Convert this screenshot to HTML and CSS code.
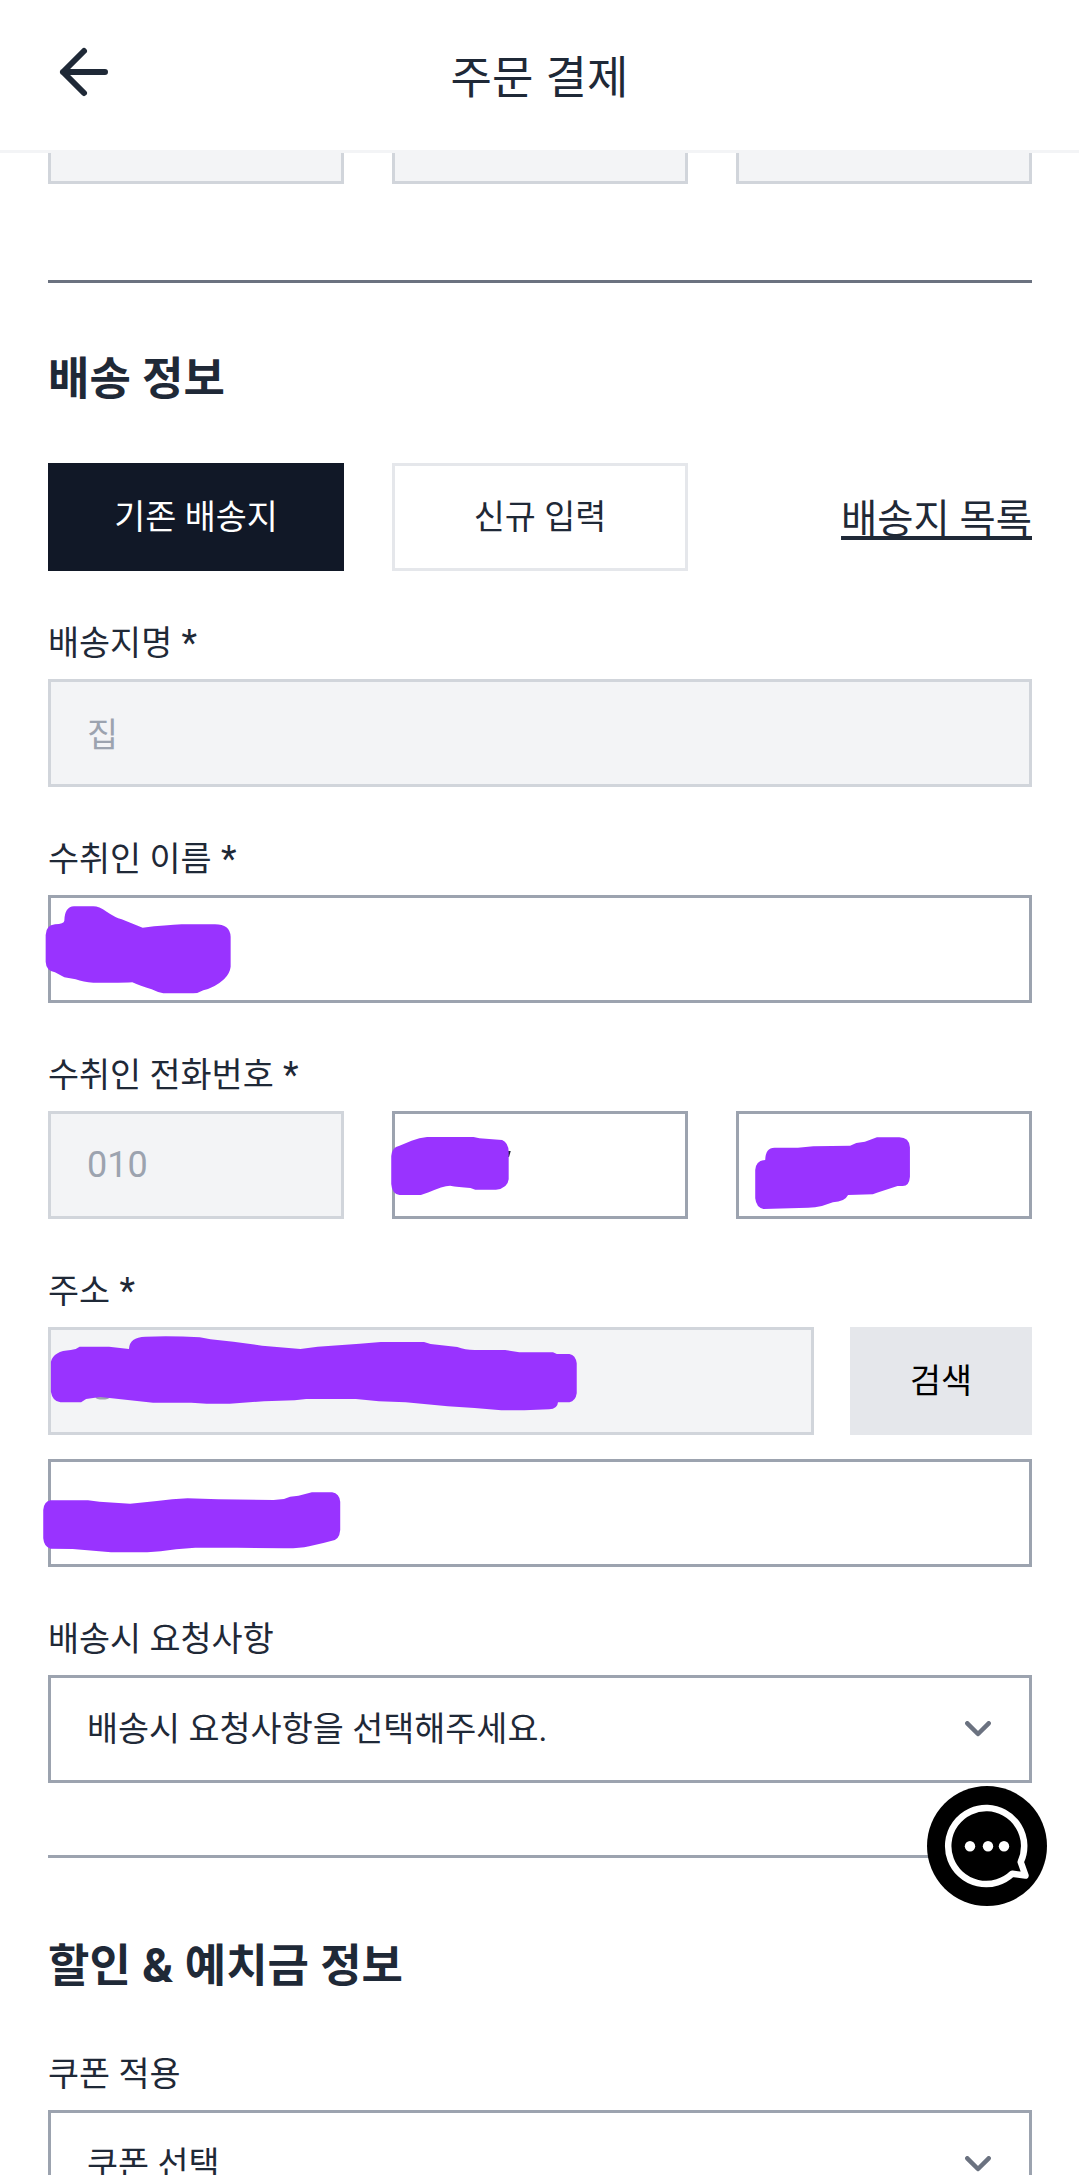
FILE: index.html
```html
<!DOCTYPE html>
<html lang="ko">
<head>
<meta charset="utf-8">
<title>주문 결제</title>
<link rel="stylesheet" href="styles.css">
</head>
<body>
<header class="topbar">
  <svg class="back" viewBox="0 0 54 54" width="54" height="54"><path d="M29 6 8 27l21 21M8 27h42"/></svg>
  <h1 class="title">주문 결제</h1>
</header>
<main class="content">
  <div class="cols">
    <div class="box disabled"></div>
    <div class="box disabled"></div>
    <div class="box disabled"></div>
  </div>

  <section class="section shipping">
    <h2 class="heading">배송 정보</h2>
    <div class="cols">
      <button class="btn primary">기존 배송지</button>
      <button class="btn outline">신규 입력</button>
      <a class="link">배송지 목록</a>
    </div>

    <div class="field">
      <label class="label">배송지명 <span class="star">*</span></label>
      <div class="box disabled"><span class="value low">집</span></div>
    </div>

    <div class="field">
      <label class="label">수취인 이름 <span class="star">*</span></label>
      <div class="hold">
        <div class="box"></div>
        <svg class="scribble" width="984" height="108"><path transform="translate(-48 -255) scale(.3333)" d="M137 885Q138 855 165 853Q192 852 193 842Q194 800 222 799H280Q297 799 320 815Q345 832 365 838L428 863Q500 855 545 853H645Q690 853 692 890V980Q690 1000 672 1018Q645 1043 610 1051Q595 1060 580 1060H490Q475 1058 455 1048Q420 1038 397 1027Q370 1029 280 1028Q250 1027 227 1018L193 1012L165 997Q138 992 137 965Z"/></svg>
      </div>
    </div>

    <div class="field">
      <label class="label">수취인 전화번호 <span class="star">*</span></label>
      <div class="cols">
        <div class="box disabled"><span class="value digits">010</span></div>
        <div class="hold">
          <div class="box"></div>
          <svg class="scribble" width="296" height="108"><path class="ink" transform="translate(-392 -81) scale(.3444 .3333)" d="M1474 363h9l-5 18h-5z"/><path transform="translate(-392 -81) scale(.3444 .3333)" d="M1136 378Q1137 352 1160 347L1195 332Q1218 323 1240 321H1375L1392 325L1458 330Q1476 338 1477 365V448Q1474 476 1440 479H1380L1366 474Q1330 471 1307 467Q1285 468 1245 487L1222 495H1160Q1138 492 1136 462Z"/></svg>
        </div>
        <div class="hold">
          <div class="box"></div>
          <svg class="scribble" width="296" height="108"><path transform="translate(-196 -81) scale(.3438 .3333)" d="M626 420Q628 392 655 390Q656 353 682 353H750L795 349L902 347L920 339L945 335L980 322H1045Q1074 322 1076 352V440Q1074 468 1055 468H1040L980 488L968 493L896 495Q887 515 852 517L820 528Q800 533 780 533L650 537Q629 533 626 505Z"/></svg>
        </div>
      </div>
    </div>

    <div class="field">
      <label class="label">주소 <span class="star">*</span></label>
      <div class="address">
        <div class="hold grow">
          <div class="box disabled"></div>
          <svg class="scribble" width="766" height="108"><ellipse class="trace" cx="54.500" cy="70.500" rx="7" ry="2"/><path transform="translate(-48 -27) scale(.3827 .3333)" d="M133 185Q140 153 185 150Q200 148 208 140H285L337 147Q338 111 380 110Q450 107 522 112L550 118L610 125L685 137L785 147L830 140L940 131L995 126H1108L1125 132L1195 141Q1215 150 1240 150H1320L1357 157H1445L1455 162H1488Q1504 165 1507 190V280Q1504 303 1488 307H1458Q1457 327 1435 328L1370 331H1310L1240 324L1170 319L1060 307L990 304L930 297H800L770 301L690 304L600 311H540L500 308H400L340 301L262 291L225 297L212 307H158Q137 304 133 275Z"/></svg>
        </div>
        <button class="btn search">검색</button>
      </div>
      <div class="hold second">
        <div class="box"></div>
        <svg class="scribble" width="984" height="108"><path transform="translate(-48 -159) scale(.3827 .3333)" d="M113 630Q115 604 132 601H230L260 605L340 611L410 603L450 598L490 595L570 598L715 600L742 597L758 590L780 587L815 577H868Q887 581 889 605V690Q887 721 865 723L845 729L808 739Q780 746 740 745L620 743L510 743L460 748L420 754L385 757H290L190 747L132 746Q115 741 113 715Z"/></svg>
      </div>
    </div>

    <div class="field">
      <label class="label">배송시 요청사항</label>
      <div class="box select"><span class="value high">배송시 요청사항을 선택해주세요.</span><svg class="chevron" width="26" height="16" viewBox="0 0 26 16"><path d="M2.300 2.300 13 13l10.700-10.700"/></svg></div>
    </div>
  </section>

  <section class="section discount">
    <h2 class="heading">할인 <span class="amp">&amp;</span> 예치금 정보</h2>
    <label class="label">쿠폰 적용</label>
    <div class="box select"><span class="value high">쿠폰 선택</span><svg class="chevron" width="26" height="16" viewBox="0 0 26 16"><path d="M2.300 2.300 13 13l10.700-10.700"/></svg></div>
  </section>
</main>
<div class="chat">
  <svg width="120" height="120" viewBox="0 0 120 120"><circle cx="60" cy="60" r="60"/><path class="bubble" d="M93.700 76A38 38 0 1 0 85.300 87.700L98.500 89.500Z"/><g class="dots"><circle cx="43" cy="60.300" r="5.200"/><circle cx="61" cy="60.300" r="5.200"/><circle cx="77" cy="60.300" r="5.200"/></g></svg>
</div>
</body>
</html>
```
FILE: styles.css
```css
* { box-sizing: border-box; }
html, body { height: 2175px; overflow: hidden; }
body {
  margin: 0;
  position: relative;
  background: #fff;
  color: #1f2937;
  font-family: Roboto, "Noto Sans CJK KR", sans-serif;
  font-size: 33.75px;
}
h1, h2 { margin: 0; }
button { font: inherit; color: inherit; margin: 0; padding: 0; border: 0; border-radius: 0; }
svg { display: block; }

.topbar {
  position: relative;
  z-index: 2;
  height: 153px;
  display: grid;
  grid-template-columns: 1fr auto 1fr;
  align-items: center;
  padding: 0 55px 0;
  background: #fff;
  border-bottom: 3px solid #f3f4f6;
}
.back { margin-top: -6px; fill: none; stroke: #1f2937; stroke-width: 6; stroke-linecap: round; stroke-linejoin: round; }
.title { padding-top: 8px; font-size: 45px; font-weight: 400; line-height: 60px; word-spacing: 1px; }

.content { width: 1080px; padding: 0 48px; margin-top: -77px; }
.cols { display: grid; grid-template-columns: repeat(3, 296px); gap: 48px; align-items: center; }
.section { border-top: 3px solid #6b7280; }
.shipping { margin-top: 96px; padding-top: 60px; }
.discount { margin-top: 72px; padding-top: 72px; border-color: #9ca3af; }
.heading { height: 72px; font-size: 45px; font-weight: 700; line-height: 74px; margin-bottom: 48px; }
.amp { font-size: 48px; line-height: 1; }

.btn { height: 108px; padding-bottom: 6px; text-align: center; }
.primary { background: #111827; color: #fff; }
.outline { background: #fff; border: 3px solid #e5e7eb; }
.search { width: 182px; background: #e5e7eb; color: #000; }
.link { justify-self: end; padding-top: 5px; font-size: 39.400px; line-height: 60px; text-decoration: underline; text-decoration-thickness: 4px; text-decoration-skip-ink: none; text-underline-offset: 3px; }

.field { margin-top: 48px; }
.label { display: block; height: 48px; line-height: 50px; margin-bottom: 12px; white-space: nowrap; }
.star { margin-left: 1px; font-size: 36px; line-height: 1; }
.box {
  height: 108px;
  display: flex;
  align-items: center;
  padding: 0 38px 0 36px;
  background: #fff;
  border: 3px solid #9ca3af;
}
.disabled { background: #f3f4f6; border-color: #d1d5db; color: #9ca3af; }
.low { padding-bottom: 1px; }
.high { padding-bottom: 6px; }
.digits { font-size: 36px; }
.select { justify-content: space-between; }
.chevron { fill: none; stroke: #6b7280; stroke-width: 4.500; stroke-linecap: round; stroke-linejoin: round; }
.address { display: flex; gap: 36px; }
.grow { flex: 1; }
.second { margin-top: 24px; }

.hold { position: relative; }
.scribble { position: absolute; left: 0; top: 0; overflow: visible; fill: #9933ff; }
.ink { fill: #1f2937; }
.trace { fill: #9ca3af; }

.chat { position: absolute; left: 927px; top: 1786px; z-index: 3; }
.bubble { fill: none; stroke: #fff; stroke-width: 6.500; stroke-linejoin: round; }
.dots { fill: #fff; }
```
